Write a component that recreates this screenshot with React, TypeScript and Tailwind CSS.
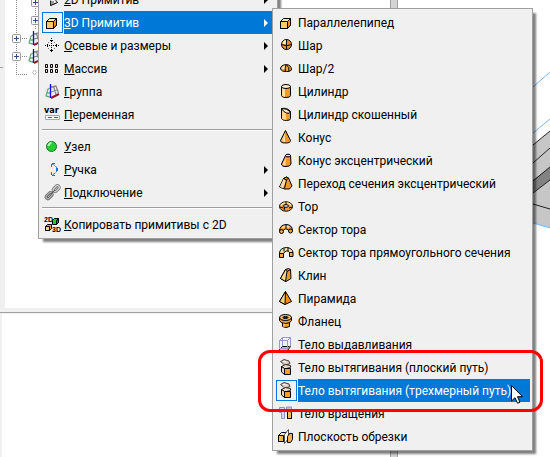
import React from 'react';

type Item = { icon: React.ReactNode; label: string; sub?: boolean; active?: boolean; mnemonic?: boolean };

function Glyph({ children }: { children: React.ReactNode }) {
    return (
        <svg width="17" height="17" viewBox="0 0 17 17" fill="none" stroke="#000" strokeWidth="1" strokeLinejoin="round" aria-hidden="true">
            {children}
        </svg>
    );
}

const icons = {
    flat: (
        <Glyph>
            <path d="M6.500 9.500v5l6-2.500M6.500 14.500l7-3-4-5" stroke="#222" />
            <rect x="7" y="10" width="3" height="3" fill="#999" stroke="none" />
        </Glyph>
    ),
    box: (
        <Glyph>
            <path d="M2.500 7.500l3-3h7v6.500l-3 3.500h-7z" fill="#ffe9b8" />
            <path d="M2.500 7.500h7v7h-7z" fill="#ffc868" />
            <path d="M9.500 7.500l3-3v6.500l-3 3.500z" fill="#ef9418" />
        </Glyph>
    ),
    axes: (
        <Glyph>
            <path d="M7.500 1v1M6 3.500h3M7.500 4v1M7.500 6v1M7.500 8v1M7.500 10v1M7.500 12v1M6 13.500h3M7.500 14v1" />
            <path d="M1 8.500h1M3.500 7v3M5 8.500h1M9 8.500h1M11 8.500h1M12.500 7v3M14 8.500h1" />
            <path d="M4 5.500h1M10 5.500h1M4 11.500h1M10 11.500h1" stroke="#777" />
        </Glyph>
    ),
    array: (
        <Glyph>
            {[1.5, 6.5, 11.5].map((x) => (
                <g key={x}>
                    <rect x={x} y="4.500" width="2" height="3" fill="#f6d9b0" />
                    <rect x={x} y="9.500" width="2" height="3" fill="#f6d9b0" />
                </g>
            ))}
        </Glyph>
    ),
    group: (
        <Glyph>
            <path d="M5 4l4-1.500 4 1 2 7-9 4z" fill="#eee" stroke="none" />
            <path d="M7 4l5-1 2.500 7M7 9l6-2M9.500 3.500l2.500 8" stroke="#888" strokeWidth="1.300" />
            <path d="M6 5L4 6 2 13l4 1M3 10h3" stroke="#69ae75" strokeWidth="1.300" />
            <path d="M6.500 1v14" stroke="#0909ef" strokeWidth="1.300" />
            <path d="M7 15l8-4" stroke="#941624" strokeWidth="2" />
        </Glyph>
    ),
    variable: (
        <Glyph>
            <text x="0" y="7" fontSize="9" fontWeight="800" fontFamily="DejaVu Sans Condensed, DejaVu Sans, sans-serif" fill="#000" stroke="none">var</text>
            <rect x="1.500" y="9.500" width="14" height="4" fill="#fff" stroke="#9aabb8" />
            <path d="M4 11.500h4M10 11.500h4" stroke="#1669b8" />
        </Glyph>
    ),
    node: (
        <Glyph>
            <circle cx="7.500" cy="8.500" r="5" fill="#25cf32" stroke="#19752a" />
            <path d="M4.500 8a3 3 0 0 1 3-3" stroke="#b5ffae" strokeWidth="2" />
        </Glyph>
    ),
    handle: (
        <Glyph>
            <path d="M8 3c3 1 5 3 5 5.500s-2 4-5 5.500M7.500 6V2.500H11M7.500 11v3.500H11" stroke="#1774d6" strokeDasharray="3 1" />
            <rect x="12" y="7" width="2" height="3" fill="#1774d6" stroke="none" />
        </Glyph>
    ),
    link: (
        <Glyph>
            <g transform="rotate(-45 8.500 8)">
                <rect x="-1" y="5.500" width="9" height="5.500" rx="2.700" fill="#bbb" stroke="#777" />
                <rect x="9" y="5.500" width="9" height="5.500" rx="2.700" fill="#ddd" stroke="#888" />
                <rect x="1" y="7.500" width="5" height="1.500" rx=".7" fill="#fff" stroke="#555" />
                <rect x="11" y="7.500" width="5" height="1.500" rx=".7" fill="#fff" stroke="#777" />
                <path d="M6 8.300h5" stroke="#555" />
            </g>
        </Glyph>
    ),
    copy: (
        <Glyph>
            <text x="0" y="6" fontSize="7" fontWeight="700" fontFamily="Liberation Sans, sans-serif" fill="#000" stroke="none">2D</text>
            <text x="8" y="16" fontSize="7" fontWeight="700" fontFamily="Liberation Sans, sans-serif" fill="#000" stroke="none">3D</text>
            <path d="M8.500 4.500l2-2h4v4l-2 2h-4z" fill="#24ce2f" />
            <path d="M12.500 4.500l2-2v4l-2 2z" fill="#2859cd" />
            <path d="M1.500 10.500l2-2h4v4l-2 2h-4z" fill="#f3a43c" />
            <path d="M1.500 10.500h4v4h-4z" fill="#ffd38a" />
        </Glyph>
    ),
    sphere: (
        <Glyph>
            <circle cx="8.500" cy="7.500" r="5" fill="#ed9228" />
            <path d="M4.500 7a4 4 0 0 1 4-4v4z" fill="#ffeac0" stroke="none" />
            <path d="M3.500 7.500q5 2.500 10 0M8.500 2.500v10" />
        </Glyph>
    ),
    hemisphere: (
        <Glyph>
            <path d="M2.500 9q0-4 6-4.500 5 .5 5 5.500-2 2-5 1.500-5 .5-6-2.500z" fill="#f5a33d" />
            <path d="M4 9q0-3 3-3.500V9z" fill="#fff0cc" stroke="none" />
            <path d="M8 5q-1.500 3-.5 6.500M8.500 5q3 2 2.500 6" />
        </Glyph>
    ),
    cylinder: (
        <Glyph>
            <path d="M3.500 3.500v9q0 2 4.500 2t4.500-2v-9" fill="#f29a27" />
            <path d="M4 5h3v9l-3-1z" fill="#ffdfa0" stroke="none" />
            <ellipse cx="8" cy="3.500" rx="4.500" ry="2" fill="#ffedc8" />
        </Glyph>
    ),
    skewCylinder: (
        <Glyph>
            <path d="M3.500 2.500v10q1 2 5 2t4-2v-7q-3-4-9-3z" fill="#f29a27" />
            <path d="M4 4l4 3v7l-4-1z" fill="#ffd690" stroke="none" />
            <path d="M3.500 2.500q5-.5 9 3.500-1 2-4 1t-5-4.500" fill="#ffedc8" />
        </Glyph>
    ),
    cone: (
        <Glyph>
            <path d="M7.500 1.500L2.500 11.500q0 2.500 5 2.500t5-2.500z" fill="#f0962a" />
            <path d="M7 4L4 11q0 1.500 3 2z" fill="#ffdda0" stroke="none" />
        </Glyph>
    ),
    eccentricCone: (
        <Glyph>
            <path d="M7.500 3.500L3.500 12q0 2.500 4.500 2.500t5-2.500l-.5-8.500q-2.500-2.500-5 0z" fill="#f0962a" />
            <path d="M8 5l-3.500 7.500q1 1 3 1z" fill="#ffdda0" stroke="none" />
            <ellipse cx="10" cy="3.500" rx="2.500" ry="1.300" fill="#ffe9bd" />
        </Glyph>
    ),
    transition: (
        <Glyph>
            <path d="M5.500 3.500L1.500 12l5 2h5l2.500-3-3.500-8-2-1z" fill="#f0962a" />
            <path d="M5.500 4L2 12l3 1 3-7z" fill="#ffdda0" stroke="none" />
            <path d="M5.500 3.500l3-1.500 2 1-2 2-3-1.500M8.500 5l-2 8.500" />
        </Glyph>
    ),
    torus: (
        <Glyph>
            <ellipse cx="8" cy="8.500" rx="6.500" ry="4.700" fill="#f29b35" />
            <path d="M3 8q1-3 5-3t5 3" stroke="#ffe0a8" strokeWidth="1.500" />
            <ellipse cx="8" cy="8" rx="2.500" ry="1.300" fill="#fff" />
            <path d="M8 4v3M2 9l3.500 1M11 10l3-1M6 12l1-3" />
        </Glyph>
    ),
    torusSector: (
        <Glyph>
            <path d="M1.500 10.500q0-6.500 6.500-7 6 0 6.500 6" fill="#f29b35" />
            <path d="M4 7q3-3 7-1" stroke="#ffe0a8" strokeWidth="1.500" />
            <path d="M5.500 9.500q2-2.500 5 0l-.5 2H5z" fill="#efefef" stroke="none" />
            <path d="M5.500 9q2-2.500 5 0M8 4v3" />
            <circle cx="3.500" cy="10.500" r="2" fill="#ffa51e" />
            <circle cx="12.500" cy="10" r="2" fill="#ffa51e" />
        </Glyph>
    ),
    rectSector: (
        <Glyph>
            <path d="M1.500 9.500q0-5.500 7-6 6 .5 6.500 5h-3.500q-1-2-3-1.500t-3 2.500z" fill="#ffe0a4" />
            <path d="M6 4.500v3M10 3.500V7" />
            <path d="M1.500 9.500h4v4h-4zM11.500 8.500h3.500v4h-3.500z" fill="#f7a63b" />
        </Glyph>
    ),
    wedge: (
        <Glyph>
            <path d="M7.500 2.500l3-1 2 1 .5 9-5 3-5.500-3z" fill="#f0962a" />
            <path d="M7.500 2.500L2.500 11.500l5 3 1.500-10z" fill="#ffd68d" />
            <path d="M9 4.500l3.500-2" />
        </Glyph>
    ),
    pyramid: (
        <Glyph>
            <path d="M7.500 1.500l-6 10 5.500 3 6.500-3z" fill="#f08d17" />
            <path d="M7.500 1.500l-6 10 5.500 3z" fill="#ffd28a" />
        </Glyph>
    ),
    flange: (
        <Glyph>
            <path d="M4.500 8v5.500q3.500 2 7 0V8z" fill="#f7a32e" />
            <path d="M1.500 4.500v3q1 3 6 3t6-3v-3z" fill="#e99a3c" />
            <ellipse cx="7.500" cy="4.500" rx="6" ry="3" fill="#f5b466" />
            <ellipse cx="7.500" cy="4.500" rx="2.500" ry="1" fill="#402000" />
            <path d="M6 10.500v3.500" stroke="#ffe0a8" />
        </Glyph>
    ),
    extrude: (
        <Glyph>
            <path d="M1.500 13.500l3-3h8l-3 4h-8z" fill="#ffbd55" />
            <path d="M1.500 4.500h8v8h-8zM1.500 4.500l3-3h8v8.500l-3 2.500M9.500 4.500l3-3M4.500 1.500V10" stroke="#9999d0" />
        </Glyph>
    ),
    sweep: (
        <Glyph>
            <path d="M2.500 2.500L6 .5l5 1.500 1 2.500L7 6.500 5 4.500z" fill="#d8c8bc" stroke="#4a4440" />
            <path d="M5 2.500l4 .5" stroke="#fff" />
            <path d="M3.500 7.500l4-2 5 1v2l-6 1.500z" fill="#e6dad0" stroke="#2b2622" />
            <path d="M3.500 7.500l3 2v6l-3-2.500z" fill="#ecd9c0" />
            <path d="M6.500 9.500h6v6h-6z" fill="#ff9f22" />
        </Glyph>
    ),
    revolve: (
        <Glyph>
            <path d="M1.500 2.500h5v11h-3v-6h-2z" fill="#d9d9f1" stroke="#8e8ec6" />
            <path d="M9.500 2.500h3v5h1v6h-4z" fill="#ffb94d" />
            <path d="M8.500 2h5v5h-5z" fill="#d9c0c8" stroke="#8e8ec6" />
            <path d="M9.500 7v6.500h4v-6" fill="#ffb94d" />
        </Glyph>
    ),
    clip: (
        <Glyph>
            <path d="M.5 7.500l3-3h5v7l-2 2h-6z" fill="#ffe9bd" />
            <path d="M.5 7.500h5v6h-5z" fill="#f7b65a" />
            <path d="M6.500 6.500l4-5v9l-4 5z" fill="#fff" stroke="#555" />
            <path d="M9.500 8.500l2-3h3v6l-2 3h-3z" fill="#f3b057" />
        </Glyph>
    ),
};

const mainGroups: Item[][] = [
    [
        { icon: icons.flat, label: '2D Примитив', sub: true },
        { icon: icons.box, label: '3D Примитив', sub: true, active: true },
        { icon: icons.axes, label: 'Осевые и размеры', sub: true },
        { icon: icons.array, label: 'Массив', sub: true },
        { icon: icons.group, label: 'Группа' },
        { icon: icons.variable, label: 'Переменная' },
    ],
    [
        { icon: icons.node, label: 'Узел' },
        { icon: icons.handle, label: 'Ручка', sub: true },
        { icon: icons.link, label: 'Подключение', sub: true },
    ],
    [{ icon: icons.copy, label: 'Копировать примитивы с 2D' }],
];

const primitives: Item[] = [
    { icon: icons.box, label: 'Параллелепипед' },
    { icon: icons.sphere, label: 'Шар' },
    { icon: icons.hemisphere, label: 'Шар/2' },
    { icon: icons.cylinder, label: 'Цилиндр' },
    { icon: icons.skewCylinder, label: 'Цилиндр скошенный' },
    { icon: icons.cone, label: 'Конус' },
    { icon: icons.eccentricCone, label: 'Конус эксцентрический' },
    { icon: icons.transition, label: 'Переход сечения эксцентрический' },
    { icon: icons.torus, label: 'Тор' },
    { icon: icons.torusSector, label: 'Сектор тора' },
    { icon: icons.rectSector, label: 'Сектор тора прямоугольного сечения' },
    { icon: icons.wedge, label: 'Клин' },
    { icon: icons.pyramid, label: 'Пирамида' },
    { icon: icons.flange, label: 'Фланец' },
    { icon: icons.extrude, label: 'Тело выдавливания' },
    { icon: icons.sweep, label: 'Тело вытягивания (плоский путь)' },
    { icon: icons.sweep, label: 'Тело вытягивания (трехмерный путь)', active: true },
    { icon: icons.revolve, label: 'Тело вращения' },
    { icon: icons.clip, label: 'Плоскость обрезки' },
];

function MenuItem({ icon, label, sub, active, mnemonic }: Item) {
    return (
        <button type="button" role="menuitem" className="flex h-[23px] w-full items-center gap-px text-left">
            <span className={`flex size-[21px] shrink-0 items-center justify-center border ${active ? 'border-[#0078d7]' : 'border-transparent'}`}>
                {icon}
            </span>
            <span className={`flex h-full flex-1 items-center justify-between whitespace-nowrap pr-1.5 ${active ? 'bg-[#0078d7] text-white' : ''}`}>
                <span>
                    {mnemonic ? <u className="underline-offset-1">{label[0]}</u> : label[0]}
                    {label.slice(1)}
                </span>
                {sub && (
                    <svg width="4" height="8" viewBox="0 0 4 8" fill="currentColor" aria-hidden="true">
                        <path d="M0 0l4 4-4 4z" />
                    </svg>
                )}
            </span>
        </button>
    );
}

function TreeLines() {
    const plus = [[12, 34], [12, 52], [31, -2], [31, 16]];
    return (
        <svg width="40" height="80" viewBox="0 0 40 80" fill="none" aria-hidden="true">
            <path d="M16.500 0v75M16 38.500h12M16 56.500h12M16 74.500h12M35.500 0v30" stroke="#888" strokeDasharray="1 1" shapeRendering="crispEdges" />
            {plus.map(([x, y]) => (
                <g key={`${x}-${y}`}>
                    <rect x={x + 0.5} y={y + 0.5} width="8" height="8" rx="1" fill="#fafafa" stroke="#989898" />
                    <path d={`M${x + 2} ${y + 4.5}h5M${x + 4.5} ${y + 2}v5`} stroke="#2c4b9c" />
                </g>
            ))}
            {[30, 48].map((y) => (
                <svg key={y} x="27" y={y} width="17" height="17" viewBox="0 0 17 17">{icons.group}</svg>
            ))}
            <path d="M34.500 70l2 2.500-2 2.500-2-2.500z" stroke="#bbb" />
        </svg>
    );
}

export default function App() {
    return (
        <div className="relative h-screen w-full overflow-hidden bg-white font-[Roboto,'Noto_Sans',sans-serif] text-[12px] leading-4 text-black">
            {/* Workspace behind the menus */}
            <div className="flex h-full">
                <div className="flex w-[390px] shrink-0 flex-col bg-[#f0f0f0]">
                    <div className="relative h-[308px] shrink-0 pl-[5px]">
                        <div className="h-full bg-white" />
                        <div className="absolute left-0 top-0">
                            <TreeLines />
                        </div>
                        <div className="absolute left-0 top-[67px] h-px w-[3px] bg-[#a0a0a0]" />
                    </div>
                    <div className="mt-1 h-px bg-[#a0a0a0]" />
                    <div className="ml-0.5 mt-px flex-1 bg-white" />
                </div>
                <div className="w-2 shrink-0 border-x border-[#a0a0a0] bg-[#d4d4d4]" />
                <div className="flex flex-1 justify-end">
                    <svg width="17" height="240" viewBox="533 0 17 240" fill="none" aria-hidden="true">
                        <path d="M533 145l17-14v97l-17-5z" fill="#c6c6c6" />
                        <path d="M533 180l17-13v13l-17 13z" fill="#828282" />
                        <path d="M533 145l17-14M533 163l17-15M533 181l17-14M533 193l17-13M533 204l17 5" stroke="#222" />
                        <path d="M533 87l17-15M533 133l17-14M533 223l17 5" stroke="#79b7f5" />
                    </svg>
                </div>
            </div>

            {/* Context menu */}
            <div role="menu" className="absolute -top-[15px] left-[38px] w-[240px] border border-[#a0a0a0] bg-[#f0f0f0] px-[3px] py-0.5 shadow-[4px_4px_2px_-1px_rgba(0,0,0,0.5)]">
                {mainGroups.map((group, idx) => (
                    <div key={idx}>
                        {idx > 0 && <div className="mb-1 mt-[3px] h-0.5 border-b border-t border-b-white border-t-[#a0a0a0]" />}
                        {group.map((item) => (
                            <MenuItem key={item.label} {...item} mnemonic />
                        ))}
                    </div>
                ))}
            </div>

            {/* Submenu */}
            <div role="menu" className="absolute left-[272px] top-2 w-[261px] border border-[#a0a0a0] bg-[#f0f0f0] py-0.5 pl-[3px] pr-0.5 shadow-[4px_4px_2px_-1px_rgba(0,0,0,0.5)]">
                {primitives.map((item) => (
                    <MenuItem key={item.label} {...item} />
                ))}
            </div>

            <div className="pointer-events-none absolute left-[258px] top-[350px] h-[62px] w-[285px] rounded-xl border-3 border-[#ff0000]" />
            <svg className="pointer-events-none absolute left-[511px] top-[385px]" width="12" height="19" viewBox="0 0 12 19" aria-hidden="true">
                <path d="M.5.5v15.500l3.500-3.300 2.500 5.500 2.500-1-2.500-5.500h5z" fill="#fff" stroke="#000" />
            </svg>
        </div>
    );
}
